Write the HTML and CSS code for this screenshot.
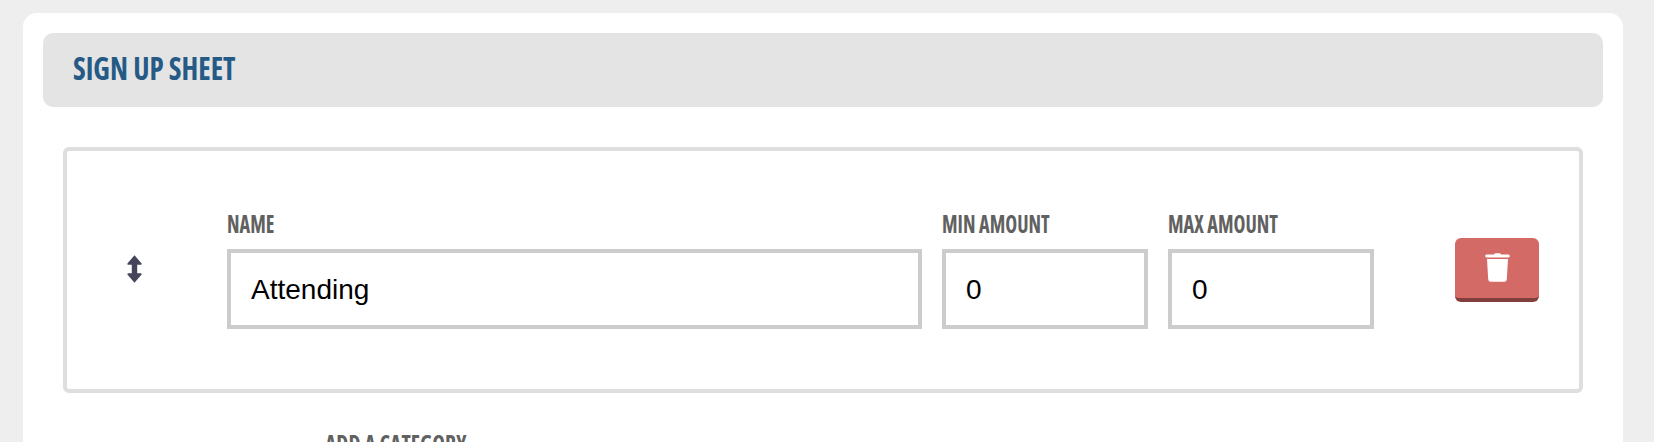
FILE: index.html
```html
<!DOCTYPE html>
<html lang="en">
<head>
<meta charset="utf-8">
<title>Sign Up Sheet</title>
<link rel="stylesheet" href="styles.css">
</head>
<body>
<main class="card">
  <header class="card-head"><h2 class="card-title">SIGN UP SHEET</h2></header>
  <section class="category">
    <div class="handle">
      <svg class="handle-icon" viewBox="0 0 15 28" aria-hidden="true"><path d="M7.500 .3 14.600 8.400Q15 9.600 13.800 9.700H10.200V18.300H13.800Q15 18.400 14.600 19.600L7.500 27.700 .4 19.600Q0 18.400 1.200 18.300H4.800V9.700H1.200Q0 9.600 .4 8.400Z"/></svg>
    </div>
    <div class="field field-name">
      <label class="field-label" for="name">NAME</label>
      <input class="field-input" id="name" type="text" value="Attending">
    </div>
    <div class="field field-num">
      <label class="field-label" for="min">MIN AMOUNT</label>
      <input class="field-input" id="min" type="text" value="0">
    </div>
    <div class="field field-num">
      <label class="field-label" for="max">MAX AMOUNT</label>
      <input class="field-input" id="max" type="text" value="0">
    </div>
    <button class="delete" type="button" aria-label="Delete">
      <svg class="delete-icon" viewBox="0 0 25 29" aria-hidden="true"><path d="M9 1.600Q9.300 .2 11 .2H14Q15.700 .2 16 1.600H23.600Q24.800 1.700 24.800 3Q24.800 4.400 23.600 4.500H1.400Q.2 4.400 .2 3Q.2 1.700 1.400 1.600ZM2 6H23L21.800 26.300Q21.600 28.800 19.200 28.800H5.800Q3.400 28.800 3.200 26.300Z"/></svg>
    </button>
  </section>
  <div class="add-label">ADD A CATEGORY</div>
</main>
</body>
</html>
```
FILE: styles.css
```css
html, body { margin: 0; height: 442px; overflow: hidden; }
body { background: #eeeeee; font-family: "Liberation Sans", Arial, sans-serif; }
.card {
  box-sizing: border-box;
  width: 1600px;
  height: 429px;
  margin: 13px 0 0 23px;
  padding: 20px;
  background: #fff;
  border-radius: 14px 14px 0 0;
}
.card-head {
  display: flex;
  align-items: center;
  height: 74px;
  padding: 0 30px 4px;
  box-sizing: border-box;
  background: #e4e4e4;
  border-radius: 10px;
}
.card-title {
  margin: 0;
  font: 700 32px/1 "Open Sans", sans-serif;
  font-stretch: 75%;
  transform: scaleX(.905);
  transform-origin: left center;
  color: #255a86;
}
.category {
  box-sizing: border-box;
  display: flex;
  align-items: center;
  height: 246px;
  margin: 40px 20px 0;
  border: 4px solid #dedede;
  border-radius: 6px;
}
.handle { display: flex; justify-content: center; width: 134px; margin: 0 26px 2px 0; }
.handle-icon { width: 15px; height: 28px; fill: #44455a; }
.field { display: flex; flex-direction: column; margin-right: 20px; }
.field-name { width: 695px; }
.field-num { width: 206px; }
.field-label {
  margin-bottom: 13px;
  font: 700 24px/24px "Open Sans", sans-serif;
  font-stretch: 75%;
  transform: scaleX(.84);
  transform-origin: left center;
  color: #616161;
}
.field-input {
  box-sizing: border-box;
  width: 100%;
  height: 80px;
  padding: 2px 20px 0;
  border: 4px solid #cccccc;
  border-radius: 0;
  outline: none;
  background: #fff;
  font: 28px "Liberation Sans", Arial, sans-serif;
  color: #000;
}
.delete {
  display: flex;
  align-items: center;
  justify-content: center;
  width: 84px;
  height: 64px;
  margin-left: 61px;
  padding: 0 0 2px;
  border: 0;
  border-bottom: 4px solid #803f3c;
  border-radius: 6px;
  background: #d46a65;
}
.delete-icon { width: 25px; height: 29px; fill: #fff; }
.add-label {
  margin: 39px 0 0 282px;
  font: 700 24px/24px "Open Sans", sans-serif;
  font-stretch: 75%;
  transform: scaleX(.9);
  transform-origin: left center;
  color: #616161;
}
```
